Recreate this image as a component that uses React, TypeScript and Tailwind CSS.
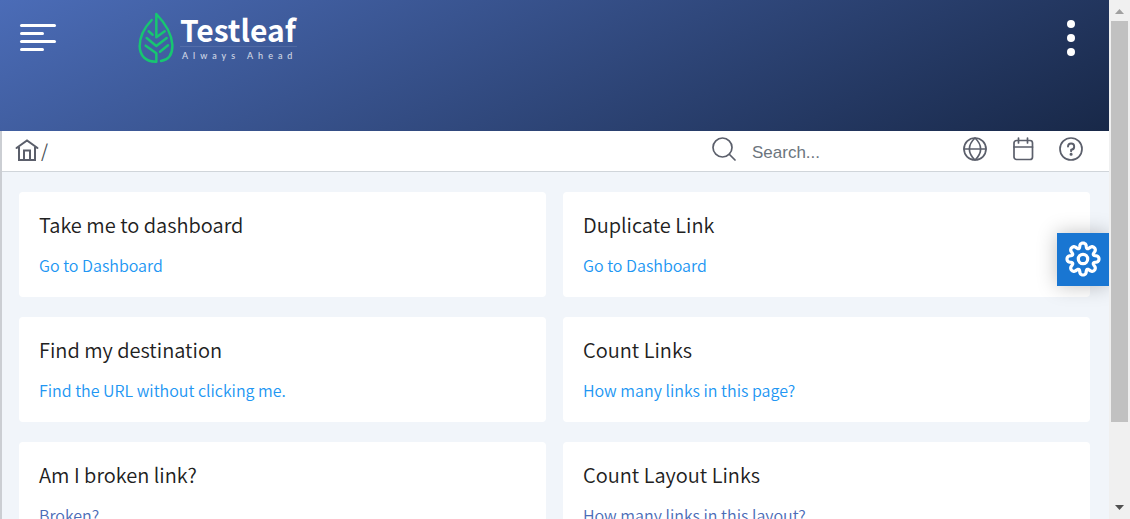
import React from "react";

type IconProps = { className?: string; children: React.ReactNode; viewBox?: string };

function Icon({ className = "size-6", children, viewBox = "0 0 24 24" }: IconProps) {
  return (
    <svg
      className={className}
      viewBox={viewBox}
      fill="none"
      stroke="currentColor"
      strokeWidth="1.7"
      strokeLinecap="round"
      strokeLinejoin="round"
      aria-hidden="true"
    >
      {children}
    </svg>
  );
}

// Outline of the settings gear: a circle with eight rounded lobes.
const gearPath =
  Array.from({ length: 160 }, (_, i) => {
    const t = (i / 160) * Math.PI * 2;
    const r = 13.6 + 2.4 * Math.cos(8 * t);
    const a = t + 0.04 * Math.sin(8 * t) + 0.025 * Math.sin(16 * t);
    return `${i ? "L" : "M"}${(18 + r * Math.cos(a)).toFixed(2)} ${(18 + r * Math.sin(a)).toFixed(2)}`;
  }).join("") + "Z";

function Logo() {
  return (
    <a href="#home" className="flex items-start gap-1.5" aria-label="Testleaf">
      <svg
        className="h-[52px] w-9"
        viewBox="414 36 108 156"
        fill="none"
        stroke="#17c671"
        strokeWidth="7.5"
        strokeLinecap="round"
        strokeLinejoin="round"
        aria-hidden="true"
      >
        <path d="M483 183C507 179 518 160 517 134C515 98 494 68 469 42V112L494 94" />
        <path d="M455 60C434 82 419 108 419 139C420 168 438 186 469 185V160L437 137" />
        <path d="M446 94L458 104M440 114L469 138L500 114M504 136L480 155" />
      </svg>
      <span className="flex flex-col text-white">
        <span className="font-['Noto_Sans_CJK_SC','Noto_Sans',sans-serif] text-[30px] leading-[34px] font-bold">
          Testleaf
        </span>
        <span className="border-t border-white/10 pl-0.5 font-['Lato',sans-serif] text-[9px] leading-[18px] tracking-[5px] text-white/80">
          Always Ahead
        </span>
      </span>
    </a>
  );
}

const cards = [
  { title: "Take me to dashboard", link: "Go to Dashboard", visited: false },
  { title: "Duplicate Link", link: "Go to Dashboard", visited: false },
  { title: "Find my destination", link: "Find the URL without clicking me.", visited: false },
  { title: "Count Links", link: "How many links in this page?", visited: false },
  { title: "Am I broken link?", link: "Broken?", visited: true },
  { title: "Count Layout Links", link: "How many links in this layout?", visited: true },
];

export default function App() {
  return (
    <div className="flex h-screen overflow-hidden bg-[#f1f5fa] font-['Noto_Sans_CJK_SC','Noto_Sans',sans-serif]">
      <div className="relative flex min-w-0 flex-1 flex-col">
        <header className="flex h-[131px] shrink-0 items-start justify-between bg-[linear-gradient(154deg,#4b6cb7,#182848)] pr-[34px] pl-5 text-white">
          <div className="flex items-start gap-[82px] pt-3">
            <button type="button" aria-label="Toggle menu" className="mt-3 flex w-9 flex-col gap-[5px]">
              <span className="h-[3px] w-full rounded-full bg-white" />
              <span className="h-[3px] w-6 rounded-full bg-white" />
              <span className="h-[3px] w-full rounded-full bg-white" />
              <span className="h-[3px] w-6 rounded-full bg-white" />
            </button>
            <Logo />
          </div>
          <button type="button" aria-label="More options" className="mt-5 flex flex-col gap-1.5">
            <span className="size-2 rounded-full bg-white" />
            <span className="size-2 rounded-full bg-white" />
            <span className="size-2 rounded-full bg-white" />
          </button>
        </header>

        <div className="flex min-h-0 flex-1 flex-col border-l-2 border-[#cbced3]">
          <div className="flex h-[41px] shrink-0 items-start justify-between border-b border-[#d0d5da] bg-white pr-[26px] pl-[13px] text-[#5b5f6b]">
            <nav aria-label="Breadcrumb" className="flex items-start gap-0.5 pt-[7px]">
              <a href="#home" aria-label="Home">
                <Icon className="size-6">
                  <path d="M1.500 10L12 2.500L22.500 10M4 9V22H20V9M9 22V12.500H15V22" strokeLinejoin="miter" strokeWidth="2" />
                </Icon>
              </a>
              <span className="text-lg leading-6 text-[#495057]">/</span>
            </nav>
            <div className="flex items-start gap-6 pt-1.5">
              <label className="flex items-start gap-4">
                <Icon>
                  <circle cx="10.500" cy="10.500" r="9.500" />
                  <path d="M17.500 17.500L23 23" />
                </Icon>
                <input
                  type="text"
                  placeholder="Search..."
                  aria-label="Search"
                  className="mt-1 h-6 w-[187px] bg-transparent font-['Liberation_Sans',sans-serif] text-[17px] leading-6 outline-none placeholder:text-[#6c757d]"
                />
              </label>
              <button type="button" aria-label="Language">
                <Icon>
                  <circle cx="12" cy="12" r="11" />
                  <path d="M1 12H23" />
                  <path d="M12 1C4.500 8 4.500 16 12 23C19.500 16 19.500 8 12 1Z" />
                </Icon>
              </button>
              <button type="button" aria-label="Calendar">
                <Icon>
                  <rect x="3" y="3.500" width="18.500" height="19" rx="2.500" />
                  <path d="M3 10H21.500M7.500 1V6M16.500 1V6" />
                </Icon>
              </button>
              <button type="button" aria-label="Help">
                <Icon>
                  <circle cx="12" cy="12" r="11" />
                  <path d="M9 9.500A3.100 3.100 0 1 1 12.100 12.700V14.200" strokeWidth="1.9" />
                  <circle cx="12.100" cy="17.300" r="0.700" fill="currentColor" />
                </Icon>
              </button>
            </div>
          </div>

          <main className="grid grid-cols-2 gap-x-[17px] gap-y-5 pt-5 pr-[19px] pl-[17px]">
            {cards.map((card) => (
              <section key={card.title} className="rounded-sm bg-white px-5 pt-[19px] pb-5">
                <h2 className="text-xl leading-7 font-[350] text-[#212121]">{card.title}</h2>
                <p className="mt-3.5 text-base leading-6 font-[350]">
                  <a href="#link" className={card.visited ? "text-[#4b6cb7]" : "text-[#2196f3]"}>
                    {card.link}
                  </a>
                </p>
              </section>
            ))}
          </main>
        </div>

        <button
          type="button"
          aria-label="Settings"
          className="absolute top-[233px] right-0 flex h-[53px] w-[52px] items-center justify-center bg-[#1976d2] pb-0.5 text-white shadow-[0_0_20px_rgba(0,0,0,0.25)]"
        >
          <Icon className="size-9" viewBox="0 0 36 36">
            <path d={gearPath} strokeWidth="3.2" />
            <circle cx="18" cy="18" r="4.700" strokeWidth="3.2" />
          </Icon>
        </button>
      </div>

      <div className="relative z-10 flex w-[21px] shrink-0 flex-col items-center bg-[#f0f0f0]" aria-hidden="true">
        <svg className="h-[21px] w-[17px] shrink-0" viewBox="0 0 17 21">
          <path d="M4 14L8.500 9L13 14Z" fill="#a0a0a0" />
        </svg>
        <div className="min-h-0 w-[17px] flex-[401] bg-[#c1c1c1]" />
        <div className="min-h-0 flex-[76]" />
        <svg className="h-[21px] w-[17px] shrink-0" viewBox="0 0 17 21">
          <path d="M4 7L8.500 12L13 7Z" fill="#505050" />
        </svg>
      </div>
    </div>
  );
}
